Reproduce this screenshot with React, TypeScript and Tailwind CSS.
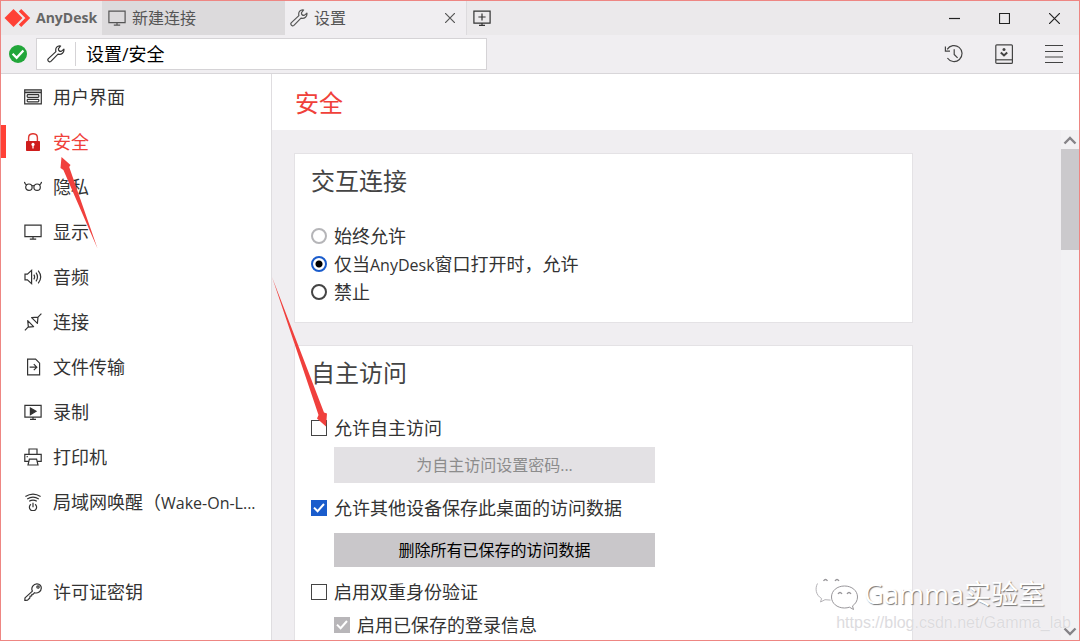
import React from "react";

type IconProps = { className?: string; children: React.ReactNode; size?: string };

function Icon({ className = "size-[18px]", children, size = "0 0 18 18" }: IconProps) {
  return (
    <svg
      viewBox={size}
      className={`shrink-0 ${className}`}
      fill="none"
      stroke="currentColor"
      strokeWidth="1.2"
      aria-hidden="true"
    >
      {children}
    </svg>
  );
}

const WrenchIcon = () => (
  <Icon>
    <path
      strokeLinejoin="round"
      d="M13.6 1C10.4.4 8 3 8.9 6.6L1.4 13.6C-.1 15.1 1.9 18 3.9 16.4L11 9.2C14.6 10 17.4 7.4 16.9 4.2L14.2 6.4C12.4 6.6 11.3 5.4 11.5 3.7Z"
    />
  </Icon>
);

const MonitorIcon = () => (
  <Icon>
    <path d="M.9 2.1h16.2v11.6H.9zM5.8 16.2h6.4M9 13.7v2.5" />
  </Icon>
);

const menu = [
  {
    name: "用户界面",
    icon: (
      <Icon>
        <path d="M.7 1.9h16.6v14H.7zM.7 4.6h16.6" />
        <path d="M1 3.2h16" strokeWidth="1" opacity=".6" />
        <rect x="3.2" y="6.7" width="11.6" height="2.6" rx=".8" />
        <rect x="3.2" y="11.3" width="11.6" height="2.6" rx=".8" />
      </Icon>
    ),
  },
  {
    name: "安全",
    active: true,
    icon: (
      <Icon>
        <path d="M4.6 8.5V4.8C4.6-.7 13.4-.7 13.4 4.8v3.7" stroke="#df3a33" strokeWidth="1.4" />
        <rect x="2" y="8" width="14" height="10" rx=".8" fill="#cf1d1c" stroke="none" />
        <path d="M9 11v4.6" stroke="#fff" strokeWidth="1.3" />
        <circle cx="9" cy="11.4" r="1.6" fill="#fff" stroke="none" />
      </Icon>
    ),
  },
  {
    name: "隐私",
    icon: (
      <Icon>
        <circle cx="4.9" cy="9.2" r="3.2" />
        <circle cx="13.1" cy="9.2" r="3.2" />
        <path d="M.4 4C.8 5.6 1.4 6.5 2.8 7M17.6 4c-.4 1.6-1 2.5-2.4 3M7.8 8q1.2-1 2.4 0" />
      </Icon>
    ),
  },
  { name: "显示", icon: <MonitorIcon /> },
  {
    name: "音频",
    icon: (
      <Icon>
        <path d="M1 6.2h2.4L7.6 2.4v13.2l-4.2-3.8H1z" />
        <path d="M9.8 6.6q1.6 2.4 0 4.8M12 4.6q3 4.4 0 8.8M14.2 2.6q5 6.4 0 12.8" />
      </Icon>
    ),
  },
  {
    name: "连接",
    icon: (
      <Icon>
        <path strokeLinejoin="round" d="M.9 17.3 5 13.2M3.7 7.6 9.6 13.6 4.4 14.2zM7.6 4.6l5.8 5.8L14 4.1zM14 4.1 17.4.7" />
      </Icon>
    ),
  },
  {
    name: "文件传输",
    icon: (
      <Icon>
        <path d="M3.6 1.2h8l4 4v11.6h-12zM5.6 9.2h7M9.8 6.2l3 3-3 3" />
      </Icon>
    ),
  },
  {
    name: "录制",
    icon: (
      <Icon>
        <path d="M.9 2.4h16.2v11.8H.9zM6 16.4h6M9 14.2v2.2" />
        <path d="M6.4 5v6.6l5.6-3.3z" fill="currentColor" />
      </Icon>
    ),
  },
  {
    name: "打印机",
    icon: (
      <Icon>
        <path d="M5 6.4V1h8v5.4M5 13.4H.8v-7h16.4v7H13M5.4 11.2h7.2L14 17H4zM2.6 8.6h1.2" />
      </Icon>
    ),
  },
  {
    name: "局域网唤醒（",
    latin: "Wake-On-L...",
    icon: (
      <Icon>
        <path d="M1.4 3.6q7.6-5 15.2 0M3.2 6q5.8-3.6 11.6 0M5.2 8.2q3.8-2.2 7.6 0" />
        <path d="M6.9 11.2a3.6 3.6 0 1 0 4.2 0M9 9.8v4.4" />
      </Icon>
    ),
  },
];

const licenseItem = {
  name: "许可证密钥",
  icon: (
    <Icon>
      <path
        strokeLinejoin="round"
        d="M8.4 8.1C6.6 4.6 9.6.8 13 .9c2.8.1 4.4 2 4.3 4.2-.1 3-3.4 5.8-6.8 4.6l-1.2 1.4-1.4.2-.2 1.6-1.6.3-.3 1.8-2.2 2.2-2.8.3.2-2.6z"
      />
      <circle cx="14" cy="4" r="1.2" />
    </Icon>
  ),
};

type MenuItem = { name: string; latin?: string; icon: React.ReactNode; active?: boolean };

function SidebarItem({ item }: { item: MenuItem }) {
  return (
    <li className={`relative ${item.active ? "text-[#f0413a]" : "text-[#333]"}`}>
      {item.active && <span className="absolute left-0 top-[6px] h-[33px] w-[5px] bg-[#ff4136]"></span>}
      <a href="#" className="flex h-[45px] items-center gap-[11px] pl-[23px]">
        {item.icon}
        <span className="truncate leading-7">
          {item.name}
          {item.latin && <span className="text-base">{item.latin}</span>}
        </span>
      </a>
    </li>
  );
}

function Check({ label, checked, disabled }: { label: string; checked?: boolean; disabled?: boolean }) {
  return (
    <label className="flex h-7 items-center gap-[7px]">
      <span className="grid size-4 place-items-center">
        <input
          type="checkbox"
          defaultChecked={checked}
          disabled={disabled}
          className="peer col-start-1 row-start-1 size-4 appearance-none border border-[#444] bg-white checked:border-[#1a5ccc] checked:bg-[#1a5ccc] disabled:border-[#b8b6b9] disabled:bg-[#b8b6b9]"
        />
        <svg
          viewBox="0 0 16 16"
          className="invisible col-start-1 row-start-1 size-4 peer-checked:visible"
          fill="none"
          stroke="#fff"
          strokeWidth="2"
          aria-hidden="true"
        >
          <path d="M3 7.6l3.6 3.6L13 4" />
        </svg>
      </span>
      {label}
    </label>
  );
}

const accessOptions = [
  { label: "始终允许", border: "border-[#b5b5b8]" },
  {
    label: <>仅当<span className="text-base">AnyDesk</span>窗口打开时，允许</>,
    border: "border-[#1a5ccc]",
    checked: true,
  },
  { label: "禁止", border: "border-[#444]" },
];

function App() {
  return (
    <div className="relative flex h-screen flex-col overflow-hidden border border-[#ee8683] bg-white font-['Open_Sans','Noto_Sans_CJK_SC',sans-serif] text-lg text-[#333]">

      {/* Title bar */}
      <header className="flex h-[34px] shrink-0 items-stretch bg-[#ebe9eb] text-base text-[#555]">
        <div className="flex w-[101px] items-center gap-[5px] pl-[3px]">
          <Icon size="0 0 27 20" className="h-5 w-[27px]">
            <path d="M9.5 1 18.5 10 9.5 19 .5 10z" fill="#ff4136" stroke="none" />
            <path d="M16 2.2 23.8 10 16 17.8" stroke="#ff4136" strokeWidth="3.4" />
          </Icon>
          <span className="text-sm font-bold text-[#666]">AnyDesk</span>
        </div>
        <button className="flex w-[183px] items-center gap-[6px] bg-[#dcdadc] pl-[6px]">
          <MonitorIcon />
          新建连接
        </button>
        <div className="flex w-[182px] items-center border-r border-[#dddbde] bg-[#f0eef1] pl-[5px] pr-2">
          <button className="flex grow items-center gap-[6px]">
            <WrenchIcon />
            设置
          </button>
          <button aria-label="关闭标签" className="p-[3px]">
            <Icon size="0 0 10 10" className="size-[10px]">
              <path d="M0 0l10 10M10 0 0 10" />
            </Icon>
          </button>
        </div>
        <button aria-label="新标签" className="px-[6px] text-[#333]">
          <Icon>
            <path d="M.9 2.1h16.2v12H.9zM6 16.4h6M9 14v2.4M5.4 8h7.2M9 4.4v7.2" />
          </Icon>
        </button>
        <div className="ml-auto flex text-[#222]">
          <button aria-label="最小化" className="grid w-[50px] place-items-center">
            <Icon size="0 0 11 11" className="size-[11px]"><path d="M0 5.5h11" /></Icon>
          </button>
          <button aria-label="最大化" className="grid w-[50px] place-items-center">
            <Icon size="0 0 11 11" className="size-[11px]"><path d="M.5.5h10v10H.5z" /></Icon>
          </button>
          <button aria-label="关闭" className="grid w-[50px] place-items-center">
            <Icon size="0 0 11 11" className="size-[11px]"><path d="M0 0l11 11M11 0 0 11" /></Icon>
          </button>
        </div>
      </header>

      {/* Address bar */}
      <div className="flex h-[39px] shrink-0 items-center border-b border-[#d8d6d9] bg-[#f0eef1]">
        <svg viewBox="0 0 18 18" className="ml-2 size-[18px]" fill="none" aria-hidden="true">
          <circle cx="9" cy="9" r="9" fill="#22a63a" />
          <path d="M3.6 8.8l4 4 6.8-7.4" stroke="#fff" strokeWidth="2.2" />
        </svg>
        <div className="ml-[9px] flex h-8 w-[451px] items-center border border-[#d5d3d6] bg-white">
          <span className="flex h-6 w-[39px] items-center justify-center border-r border-[#d5d3d6]">
            <WrenchIcon />
          </span>
          <input
            aria-label="地址"
            defaultValue="设置/安全"
            className="h-7 min-w-0 grow bg-transparent px-[10px] text-lg text-black outline-none"
          />
        </div>
        <div className="ml-auto flex text-[#444]">
          <button aria-label="历史" className="grid w-[50px] place-items-center">
            <Icon size="0 0 20 20" className="size-5">
              <path d="M3.2 5.4A8 8 0 1 1 3.4 14M1.4 2.6v4.6H6M10.2 5.2v5.2l3.4 3.4" />
            </Icon>
          </button>
          <button aria-label="下载" className="grid w-[50px] place-items-center">
            <Icon size="0 0 20 20" className="size-5">
              <rect x="1.8" y=".8" width="16.6" height="18.6" rx="1" />
              <path d="M1.8 15.8h16.6" />
              <circle cx="10" cy="5.6" r="1.5" fill="currentColor" stroke="none" />
              <path d="M6.8 8.4l3.2 3 3.2-3" strokeWidth="2" />
            </Icon>
          </button>
          <button aria-label="菜单" className="grid w-[50px] place-items-center">
            <Icon size="0 0 20 20" className="size-5">
              <path d="M1 1.5h18M1 7.5h18M1 13h18M1 18.5h18" />
            </Icon>
          </button>
        </div>
      </div>

      <div className="flex min-h-0 grow">
        {/* Sidebar */}
        <nav className="w-[271px] shrink-0 border-r border-[#dfdde0]">
          <ul>
            {menu.map((item) => (
              <SidebarItem key={item.name} item={item} />
            ))}
          </ul>
          <ul className="mt-[45px]">
            <SidebarItem item={licenseItem} />
          </ul>
        </nav>

        {/* Settings */}
        <div className="flex min-w-0 grow flex-col">
          <h1 className="flex h-14 shrink-0 items-center pl-[23px] pt-[2px] text-2xl text-[#f0413a]">安全</h1>

          <div className="flex min-h-0 grow bg-[#f0eef1]">
            <main className="min-w-0 grow overflow-hidden pl-[22px] pt-[23px]">
              <section className="w-[619px] max-w-full border border-[#e4e2e5] bg-white px-4 pb-4 pt-[11px]">
                <h2 className="mb-[25px] text-2xl text-[#444]">交互连接</h2>
                {accessOptions.map((option, index) => (
                  <label key={index} className="flex h-7 items-center gap-[7px]">
                    <input
                      type="radio"
                      name="access"
                      defaultChecked={option.checked}
                      className={`size-4 appearance-none rounded-full border-2 bg-white checked:bg-[radial-gradient(circle,#000_0_3px,#fff_4px)] ${option.border}`}
                    />
                    <span>{option.label}</span>
                  </label>
                ))}
              </section>

              <section className="mt-[22px] w-[619px] max-w-full border border-[#e4e2e5] bg-white px-4 pb-4 pt-[11px]">
                <h2 className="mb-[25px] text-2xl text-[#444]">自主访问</h2>
                <Check label="允许自主访问" />
                <button disabled className="mb-[11px] ml-[23px] mt-[5px] block h-9 w-[321px] bg-[#e3e1e4] text-base text-[#8c8c8c]">
                  为自主访问设置密码...
                </button>
                <Check label="允许其他设备保存此桌面的访问数据" checked />
                <button className="mb-[11px] ml-[23px] mt-[11px] block h-[34px] w-[321px] bg-[#c9c7ca] text-base text-black">
                  删除所有已保存的访问数据
                </button>
                <Check label="启用双重身份验证" />
                <div className="ml-[23px] mt-[5px]">
                  <Check label="启用已保存的登录信息" checked disabled />
                </div>
              </section>
            </main>

            {/* Scroll bar */}
            <div className="flex w-[18px] shrink-0 flex-col bg-[#f2f1f3] text-[#858387]">
              <button aria-label="向上滚动" className="grid h-[19px] place-items-center">
                <Icon size="0 0 14 14" className="size-[14px]"><path d="M1.5 10.5 7 5l5.5 5.5" strokeWidth="2.4" /></Icon>
              </button>
              <div className="h-[101px] bg-[#cbc9cc]"></div>
              <button aria-label="向下滚动" className="mt-auto grid h-[19px] place-items-center">
                <Icon size="0 0 14 14" className="size-[14px]"><path d="M1.5 4.5 7 10l5.5-5.5" strokeWidth="2.4" /></Icon>
              </button>
            </div>
          </div>
        </div>
      </div>

      {/* Pointer arrows */}
      <svg viewBox="0 0 38 92" className="pointer-events-none absolute left-[59px] top-[156px] h-[92px] w-[38px]" fill="#f0403d" aria-hidden="true">
        <path d="M1.5 0 10.5 8 9.2 10 37.5 91.5 3.4 13 .5 11z" />
      </svg>
      <svg viewBox="0 0 58 152" className="pointer-events-none absolute left-[270px] top-[275px] h-[152px] w-[58px]" fill="#f0403d" aria-hidden="true">
        <path d="M1 1 53 136.5 56 137.5 55 150.5 46 142.5 47.5 139z" />
      </svg>

      {/* Watermark */}
      <div className="pointer-events-none absolute bottom-[5px] right-[8px] flex flex-col items-end">
        <div className="mr-[26px] flex items-center gap-[6px]">
          <svg viewBox="0 0 43 34" className="h-[34px] w-[43px]" fill="#fff" stroke="#98969a" strokeWidth="1" aria-hidden="true">
            <path d="M16 1C7 1 1 6 1 12.5c0 4 2.4 7 5.6 9L5.5 25l4.5-2.3c3 .8 5.5 1 8 .8L31 12C30 5 23 1 16 1z" stroke="none" />
            <path d="M2.5 6.5C0 11 .5 18 6.6 21.5L5.5 25l4.5-2.3 5.5.4" fill="none" stroke="#b5b3b7" />
            <path d="M29.5 9C22 9 16.5 13.8 16.5 20S22 31 29.5 31c1.8 0 3.4-.3 5-.8l4 2.3-1-3.6c3-2 5-5.2 5-8.9C42.5 13.800 37 9 29.500 9z" />
            <path d="M8.5 4q2-3 4 0M20 4q2-3 4 0M23 17q2-3 4 0M32 17q2-3 4 0" fill="none" strokeWidth="1.3" />
          </svg>
          <span className="text-[27px] leading-8 text-white [text-shadow:1px_1px_1px_#777]">Gamma实验室</span>
        </div>
        <span className="font-['Liberation_Sans',sans-serif] text-base text-[#dcdbde] [text-shadow:0_0_1px_#fff]">
          https://blog.csdn.net/Gamma_lab
        </span>
      </div>
    </div>
  );
}

export default App;
